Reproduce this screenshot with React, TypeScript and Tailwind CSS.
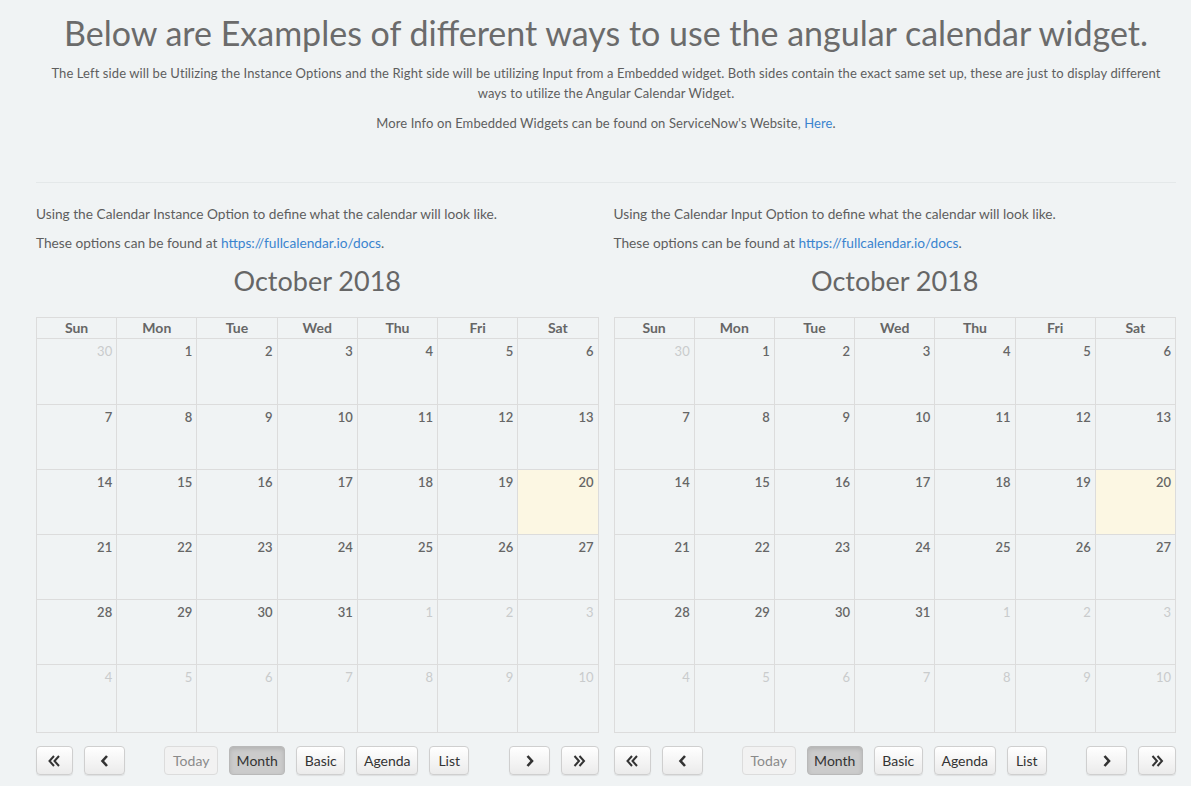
import React from "react";

type Day = { n: number; other?: boolean; today?: boolean };

const weeks: Day[][] = [
  [{ n: 30, other: true }, { n: 1 }, { n: 2 }, { n: 3 }, { n: 4 }, { n: 5 }, { n: 6 }],
  [{ n: 7 }, { n: 8 }, { n: 9 }, { n: 10 }, { n: 11 }, { n: 12 }, { n: 13 }],
  [{ n: 14 }, { n: 15 }, { n: 16 }, { n: 17 }, { n: 18 }, { n: 19 }, { n: 20, today: true }],
  [{ n: 21 }, { n: 22 }, { n: 23 }, { n: 24 }, { n: 25 }, { n: 26 }, { n: 27 }],
  [{ n: 28 }, { n: 29 }, { n: 30 }, { n: 31 }, { n: 1, other: true }, { n: 2, other: true }, { n: 3, other: true }],
  [4, 5, 6, 7, 8, 9, 10].map((n) => ({ n, other: true })),
];

const rowHeights = ["h-[66px]", "h-[65px]", "h-[65px]", "h-[65px]", "h-[65px]", "h-[68px]"];
const dayNames = ["Sun", "Mon", "Tue", "Wed", "Thu", "Fri", "Sat"];

function Arrow({ dir, double }: { dir: "l" | "r"; double?: boolean }) {
  const pts = (x: number) => (dir === "l" ? `${x + 4.5},1 ${x},6 ${x + 4.5},11` : `${x},1 ${x + 4.5},6 ${x},11`);
  return (
    <svg width={double ? 13 : 9} height="12" viewBox={double ? "0 0 13 12" : "0 0 9 12"} className="text-[#333]">
      {double ? (
        <>
          <polyline points={pts(1.5)} fill="none" stroke="currentColor" strokeWidth="2" />
          <polyline points={pts(6.5)} fill="none" stroke="currentColor" strokeWidth="2" />
        </>
      ) : (
        <polyline points={pts(2.5)} fill="none" stroke="currentColor" strokeWidth="2.6" />
      )}
    </svg>
  );
}

function Btn({ children, w, active, disabled }: { children: React.ReactNode; w: string; active?: boolean; disabled?: boolean }) {
  let cls = "bg-linear-to-b from-white to-[#ebebeb] border-[#cfcfcf] text-[#333] shadow-[0_1px_1px_rgba(0,0,0,0.08)]";
  if (active) cls = "bg-[#cbcbcb] border-[#b9b9b9] text-[#333] shadow-[inset_0_2px_4px_rgba(0,0,0,0.12)]";
  if (disabled) cls = "bg-[#f2f2f2] border-[#dcdcdc] text-[#8a8a8a]";
  return (
    <button className={`${w} h-[29px] flex items-center justify-center rounded-[4px] border text-[14px] leading-none ${cls}`}>
      {children}
    </button>
  );
}

function Calendar({ title }: { title: string }) {
  return (
    <div className="flex flex-col text-[13.7px]">
      <p className="h-[20px] leading-[20px] mt-[21px]">Using the Calendar {title} Option to define what the calendar will look like.</p>
      <p className="h-[20px] leading-[20px] mt-[9px]">
        These options can be found at <a className="text-[#3a84cf]">https://fullcalendar.io/docs</a>.
      </p>
      <h2 className="text-center text-[27px] leading-[36px] mt-[10px] text-[#666]">October 2018</h2>
      <table className="w-full table-fixed border-collapse mt-[18px]">
        <thead>
          <tr className="h-[21px]">
            {dayNames.map((d) => (
              <th key={d} className="border border-[#dcdcdc] text-[14px] font-bold text-[#666] leading-[18px] p-0">
                {d}
              </th>
            ))}
          </tr>
        </thead>
        <tbody>
          {weeks.map((wk, i) => (
            <tr key={i} className={rowHeights[i]}>
              {wk.map((d, j) => (
                <td
                  key={j}
                  className={`border border-[#dcdcdc] align-top text-right pr-[4px] pt-[3px] text-[13px] leading-[18px] ${
                    d.today ? "bg-[#fcf7e3]" : ""
                  } ${d.other ? "text-[#c9cbcc]" : "text-[#666] font-semibold"}`}
                >
                  {d.n}
                </td>
              ))}
            </tr>
          ))}
        </tbody>
      </table>
      <div className="flex items-center justify-between mt-[13px]">
        <div className="flex gap-[11px]">
          <Btn w="w-[37px]"><Arrow dir="l" double /></Btn>
          <Btn w="w-[41px]"><Arrow dir="l" /></Btn>
        </div>
        <div className="flex gap-[11px]">
          <Btn w="w-[54px]" disabled>Today</Btn>
          <Btn w="w-[56px]" active>Month</Btn>
          <Btn w="w-[49px]">Basic</Btn>
          <Btn w="w-[62px]">Agenda</Btn>
          <Btn w="w-[40px]">List</Btn>
        </div>
        <div className="flex gap-[11px]">
          <Btn w="w-[41px]"><Arrow dir="r" /></Btn>
          <Btn w="w-[38px]"><Arrow dir="r" double /></Btn>
        </div>
      </div>
    </div>
  );
}

export default function App() {
  return (
    <div className="min-h-screen bg-[#f0f3f4] text-[#5e5e5e] text-[14px] font-['Lato',sans-serif] pl-[36px] pr-[15px] overflow-hidden">
      <div className="text-center">
        <h1 className="text-[34px] leading-[40px] pt-[13px] text-[#6b6b6b] font-normal">
          Below are Examples of different ways to use the angular calendar widget.
        </h1>
        <p className="text-[13px] tracking-[0.1px] leading-[20px] mt-[10px] px-[10px]">
          The Left side will be Utilizing the Instance Options and the Right side will be utilizing Input from a Embedded widget. Both sides contain the exact same set up, these are just to display different ways to utilize the Angular Calendar Widget.
        </p>
        <p className="text-[13px] tracking-[0.1px] leading-[20px] mt-[10px]">
          More Info on Embedded Widgets can be found on ServiceNow's Website, <a className="text-[#3a84cf]">Here</a>.
        </p>
      </div>
      <div className="mt-[49px] border-t border-[#e4e8e9]" />
      <div className="grid grid-cols-2 gap-[15px]">
        <Calendar title="Instance" />
        <Calendar title="Input" />
      </div>
    </div>
  );
}
